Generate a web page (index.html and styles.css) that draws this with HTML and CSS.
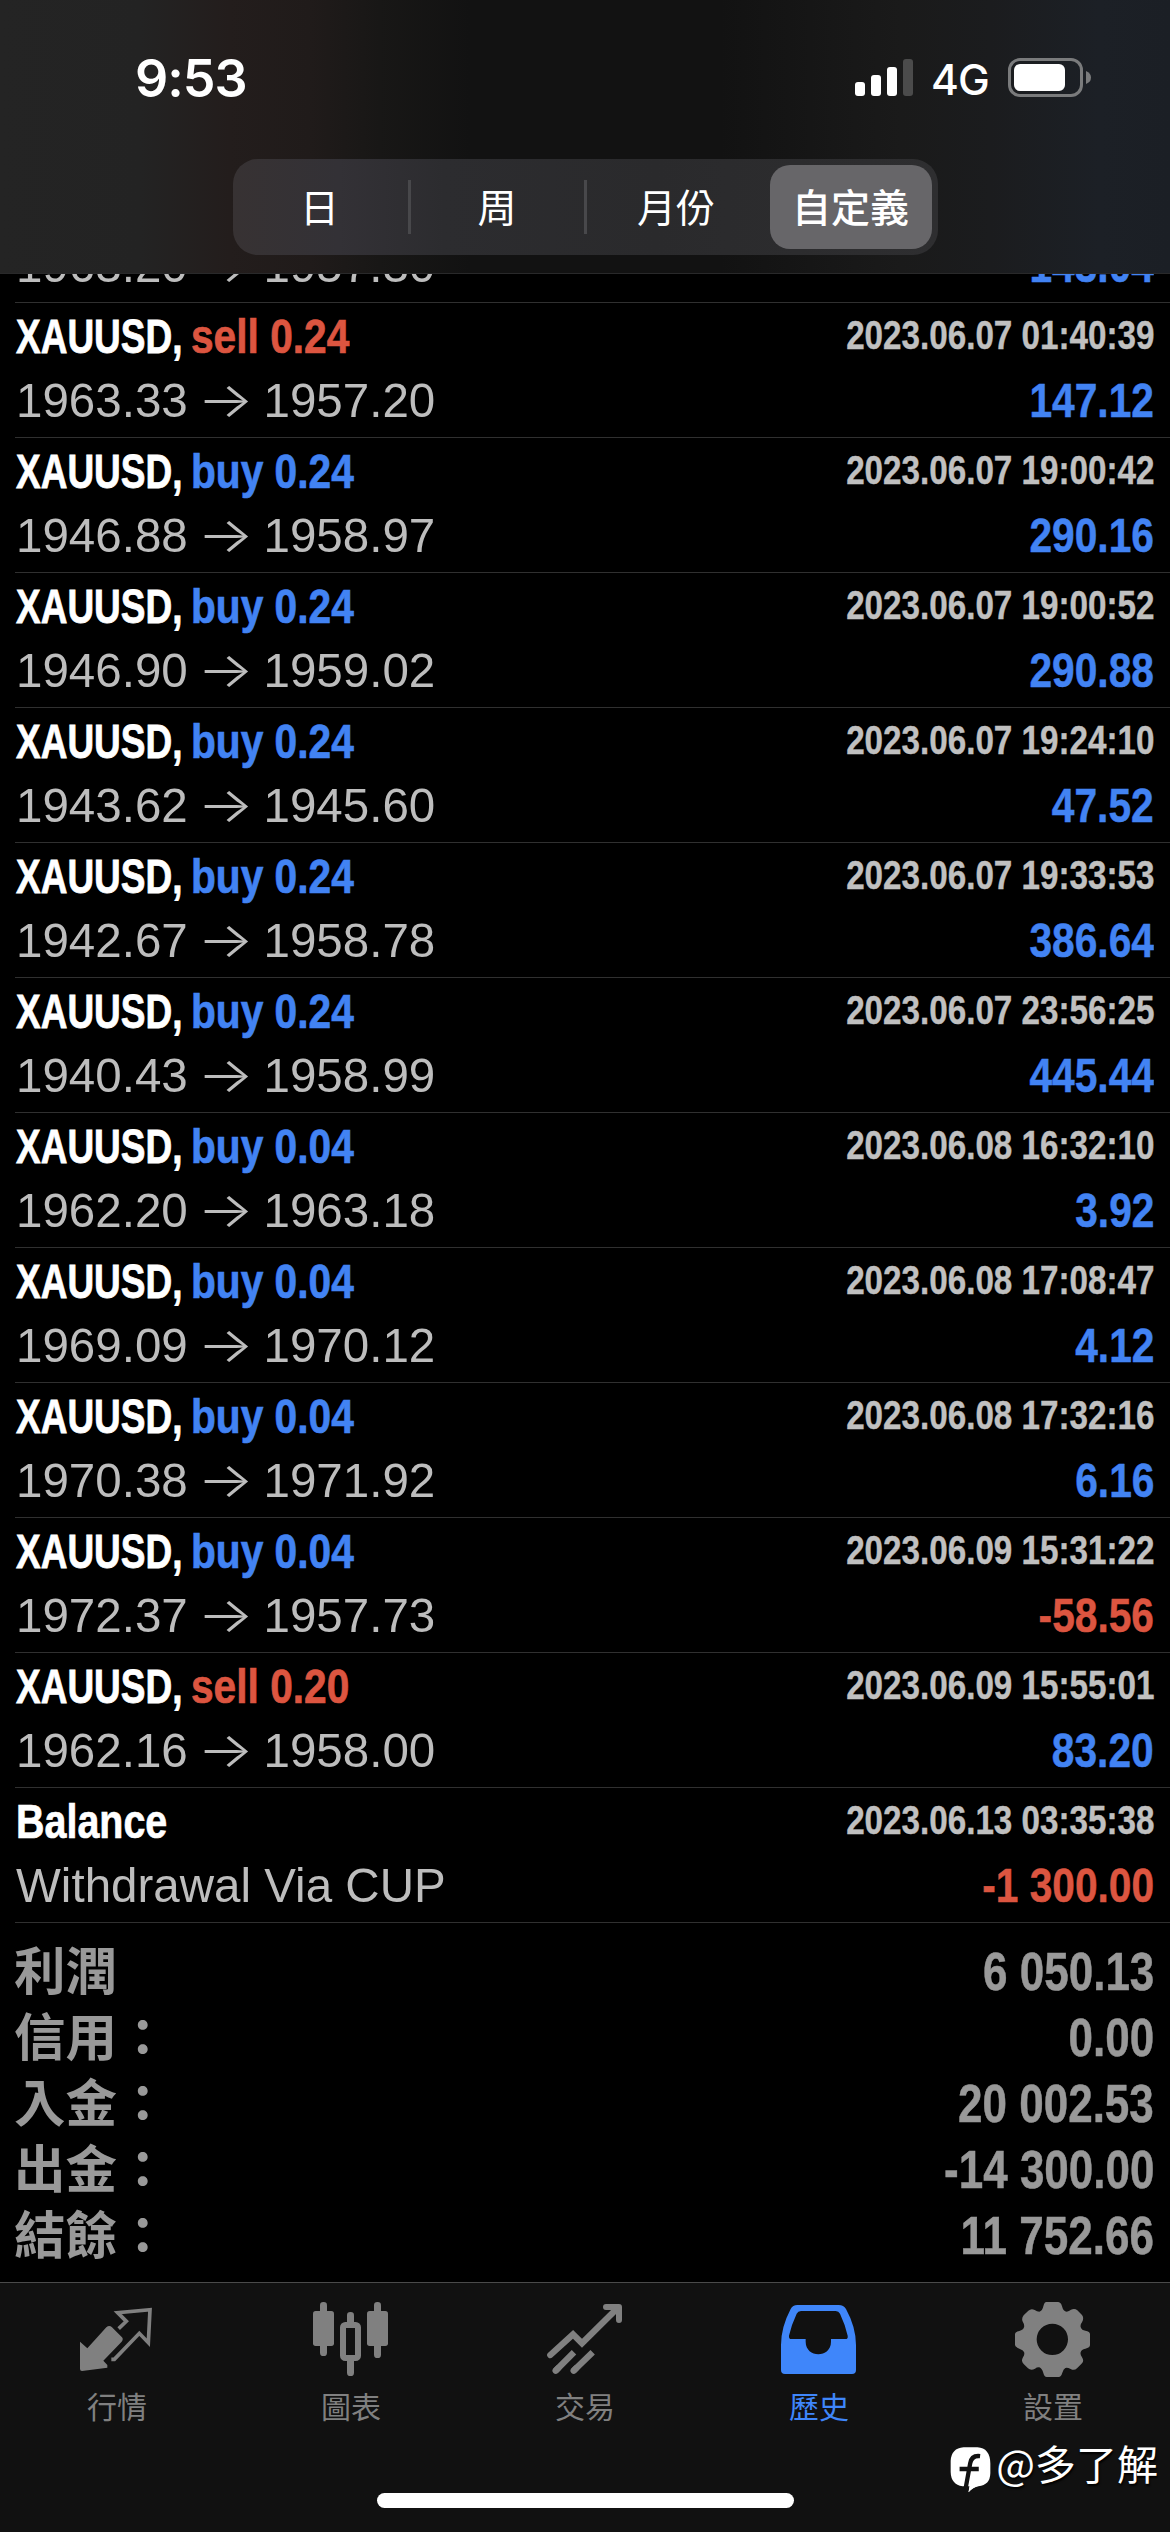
FILE: index.html
```html
<!DOCTYPE html>
<html lang="zh-Hant">
<head>
<meta charset="utf-8">
<title>歷史</title>
<link rel="stylesheet" href="styles.css">
</head>
<body>
<div class="screen">
  <header class="header">
    <div class="status">
      <span class="clock">9:53</span>
      <div class="status-right">
        <svg class="signal" viewBox="0 0 58 38"><g fill="#fff"><rect x="0" y="23" width="10" height="14" rx="3"/><rect x="16" y="16" width="10" height="21" rx="3"/><rect x="32" y="8" width="10" height="29" rx="3"/></g><rect x="48" y="0" width="10" height="37" rx="3" fill="#4b4b4b"/></svg>
        <span class="network">4G</span>
        <svg class="battery" viewBox="0 0 83 40"><rect x="1.5" y="1.5" width="72" height="36" rx="10.5" fill="none" stroke="#7a7b7c" stroke-width="3"/><rect x="6" y="6" width="51" height="27" rx="6" fill="#fff"/><path d="M78 13q5 2 5 6.500t-5 6.500z" fill="#7a7b7c"/></svg>
      </div>
    </div>
    <nav class="segments">
      <span class="segment day">日</span>
      <span class="segment week">周</span>
      <span class="segment month">月份</span>
      <span class="segment selected">自定義</span>
    </nav>
  </header>

  <main class="history">
    <section class="deals">
      <article class="deal clipped"><div class="line bottom"><span class="prices">1963.20<i>→</i>1957.30</span><span class="amount up">143.04</span></div></article>
      <article class="deal"><div class="line top"><span class="symbol">XAUUSD,</span><span class="side sell">sell 0.24</span><span class="time">2023.06.07 01:40:39</span></div><div class="line bottom"><span class="prices">1963.33<i>→</i>1957.20</span><span class="amount up">147.12</span></div></article>
      <article class="deal"><div class="line top"><span class="symbol">XAUUSD,</span><span class="side buy">buy 0.24</span><span class="time">2023.06.07 19:00:42</span></div><div class="line bottom"><span class="prices">1946.88<i>→</i>1958.97</span><span class="amount up">290.16</span></div></article>
      <article class="deal"><div class="line top"><span class="symbol">XAUUSD,</span><span class="side buy">buy 0.24</span><span class="time">2023.06.07 19:00:52</span></div><div class="line bottom"><span class="prices">1946.90<i>→</i>1959.02</span><span class="amount up">290.88</span></div></article>
      <article class="deal"><div class="line top"><span class="symbol">XAUUSD,</span><span class="side buy">buy 0.24</span><span class="time">2023.06.07 19:24:10</span></div><div class="line bottom"><span class="prices">1943.62<i>→</i>1945.60</span><span class="amount up">47.52</span></div></article>
      <article class="deal"><div class="line top"><span class="symbol">XAUUSD,</span><span class="side buy">buy 0.24</span><span class="time">2023.06.07 19:33:53</span></div><div class="line bottom"><span class="prices">1942.67<i>→</i>1958.78</span><span class="amount up">386.64</span></div></article>
      <article class="deal"><div class="line top"><span class="symbol">XAUUSD,</span><span class="side buy">buy 0.24</span><span class="time">2023.06.07 23:56:25</span></div><div class="line bottom"><span class="prices">1940.43<i>→</i>1958.99</span><span class="amount up">445.44</span></div></article>
      <article class="deal"><div class="line top"><span class="symbol">XAUUSD,</span><span class="side buy">buy 0.04</span><span class="time">2023.06.08 16:32:10</span></div><div class="line bottom"><span class="prices">1962.20<i>→</i>1963.18</span><span class="amount up">3.92</span></div></article>
      <article class="deal"><div class="line top"><span class="symbol">XAUUSD,</span><span class="side buy">buy 0.04</span><span class="time">2023.06.08 17:08:47</span></div><div class="line bottom"><span class="prices">1969.09<i>→</i>1970.12</span><span class="amount up">4.12</span></div></article>
      <article class="deal"><div class="line top"><span class="symbol">XAUUSD,</span><span class="side buy">buy 0.04</span><span class="time">2023.06.08 17:32:16</span></div><div class="line bottom"><span class="prices">1970.38<i>→</i>1971.92</span><span class="amount up">6.16</span></div></article>
      <article class="deal"><div class="line top"><span class="symbol">XAUUSD,</span><span class="side buy">buy 0.04</span><span class="time">2023.06.09 15:31:22</span></div><div class="line bottom"><span class="prices">1972.37<i>→</i>1957.73</span><span class="amount down">-58.56</span></div></article>
      <article class="deal"><div class="line top"><span class="symbol">XAUUSD,</span><span class="side sell">sell 0.20</span><span class="time">2023.06.09 15:55:01</span></div><div class="line bottom"><span class="prices">1962.16<i>→</i>1958.00</span><span class="amount up">83.20</span></div></article>
      <article class="deal"><div class="line top"><span class="balance">Balance</span><span class="time">2023.06.13 03:35:38</span></div><div class="line bottom"><span class="prices">Withdrawal Via CUP</span><span class="amount down">-1 300.00</span></div></article>
    </section>
    <section class="summary">
      <div class="total"><span>利潤</span><span class="sum">6 050.13</span></div>
      <div class="total"><span>信用：</span><span class="sum">0.00</span></div>
      <div class="total"><span>入金：</span><span class="sum">20 002.53</span></div>
      <div class="total"><span>出金：</span><span class="sum">-14 300.00</span></div>
      <div class="total"><span>結餘：</span><span class="sum">11 752.66</span></div>
    </section>
  </main>

  <footer class="tabbar">
    <div class="tabs">
      <div class="tab"><svg viewBox="51 24 240 240"><path fill="currentColor" d="M60 155L82 175 139 112Q148 104 156 112L186 142Q191 148 185 155L130 212 142 225V233L66 243Q60 243 60 237Z"/><path fill="none" stroke="currentColor" stroke-width="11" stroke-linejoin="miter" d="M176 116L199 94 173 68 270 59 265 158 238 130 163 208H154"/></svg><span>行情</span></div>
      <div class="tab"><svg viewBox="753 24 240 240"><g fill="currentColor"><rect x="780" y="36" width="21" height="162" rx="10"/><rect x="759" y="63" width="63" height="105" rx="8"/><rect x="942" y="36" width="21" height="168" rx="10"/><rect x="921" y="63" width="63" height="105" rx="8"/><rect x="861" y="66" width="21" height="45" rx="10"/><rect x="861" y="200" width="21" height="58" rx="10"/></g><rect x="849" y="105" width="45" height="99" rx="7" fill="none" stroke="currentColor" stroke-width="18"/></svg><span>圖表</span></div>
      <div class="tab"><svg viewBox="45 24 240 240"><g fill="none" stroke="currentColor" stroke-width="19" stroke-linecap="round"><path d="M61 195L129 133 156 160 262 55"/><path stroke-width="18" stroke-linejoin="round" d="M228 51H267V90"/><path stroke-linecap="butt" d="M76 243L132 187M130 243L188 187"/><path d="M77 242l8-8M131 242l8-8"/></g></svg><span>交易</span></div>
      <div class="tab active"><svg viewBox="747 24 240 240"><path fill="currentColor" fill-rule="evenodd" d="M802 45H926Q941 45 948 57Q978 112 978 165V240Q978 252 966 252H765Q753 252 753 240V165Q753 112 782 57Q788 45 802 45ZM813 63Q804 63 800 71Q784 105 777 137Q776 147 784 147H827V155C827 205 903 205 903 155V147H946Q955 147 953 137Q946 105 930 71Q926 63 917 63Z"/></svg><span>歷史</span></div>
      <div class="tab"><svg viewBox="249 24 240 240"><path fill="currentColor" fill-rule="evenodd" d="M349 36H385Q393 37 396 49Q400 65 410 65Q417 64 423 59Q434 54 442 61L456 75Q463 84 456 97Q449 106 453 113Q455 120 466 122Q480 125 480 132V165Q480 173 466 176Q454 178 452 187Q450 194 456 202Q463 212 456 220L441 235Q433 243 422 237Q411 231 406 234Q400 237 397 248Q393 261 386 261H350Q343 261 340 249Q336 235 328 232Q321 231 315 236Q303 243 294 235L281 222Q272 214 279 202Q285 193 282 186Q280 180 268 176Q255 171 255 165V132Q255 126 268 123Q280 120 282 112Q284 105 279 97Q273 86 281 76L295 62Q304 54 314 60Q321 65 328 65Q337 64 340 49Q343 36 349 36ZM367 101A47 47 0 1 0 367 195A47 47 0 1 0 367 101Z"/></svg><span>設置</span></div>
    </div>
    <div class="home"></div>
  </footer>

  <div class="watermark">
    <svg viewBox="54 468 124 144"><path fill="#fff" d="M95 471H137Q175 473 176 520V550Q175 586 140 589Q124 592 110 607L114 589H92Q57 584 56 546V512Q58 474 95 471Z"/><path fill="none" stroke="#111" stroke-width="13" d="M145 498Q119 495 115 520L101 597M83 537H141"/><path fill="#fff" d="M113 588H140Q124 592 110 607Z"/></svg>
    <span>@多了解</span>
  </div>
</div>
</body>
</html>
```
FILE: styles.css
```css
* { box-sizing: border-box; }
body { margin: 0; background: #000; }

.screen {
  position: relative;
  display: flex;
  flex-direction: column;
  width: 1170px;
  height: 2532px;
  overflow: hidden;
  background: #000;
  color: #fff;
  font-family: "Liberation Sans", "Noto Sans CJK TC", sans-serif;
}

/* header */
.header {
  display: flex;
  flex-direction: column;
  flex: none;
  height: 274px;
  align-items: center;
  border-bottom: 1px solid #29292a;
  background: linear-gradient(90deg, #242424 0, #232323 140px, #231d1c 230px, #201b1a 310px, #181716 380px, #121212 470px, #121212 720px, #1a1a1a 900px, #1b1c1e 990px, #1c2026 1100px, #1b1f25 1170px);
}
.status {
  display: flex;
  justify-content: space-between;
  width: 100%;
  height: 159px;
  padding: 0 79px 0 135px;
}
.clock {
  padding-top: 49px;
  font: 600 52px/60px Inter, sans-serif;
  letter-spacing: -1px;
}
.status-right { display: flex; align-items: flex-start; }
.signal { width: 58px; height: 38px; margin: 59px 18px 0 0; }
.network {
  width: 77px;
  padding-top: 55px;
  font: 500 42.500px/50px Inter, sans-serif;
  letter-spacing: -1px;
}
.battery { width: 83px; height: 40px; margin-top: 58px; }

.segments {
  display: grid;
  grid-template-columns: 172px 176px 183px 162px;
  width: 705px;
  height: 96px;
  padding: 6px;
  border-radius: 25px;
  background: linear-gradient(90deg, #373233, #333136 15%, #2c2c2f 30%, #2a2a2c 60%, #2e2e30);
}
.segment {
  display: flex;
  align-items: center;
  justify-content: center;
  padding-bottom: 4px;
  font: 400 39px/50px "Noto Sans CJK TC", sans-serif;
}
.day, .week { background: linear-gradient(#48484b, #48484b) 100% 50% / 3px 54px no-repeat; }
.day { padding-right: 10px; }
.week { padding-right: 3px; }
.month { padding-right: 4px; }
.selected { border-radius: 20px; background: #676669; font-weight: 500; }

/* deals */
.history { flex: none; height: 2008px; overflow: hidden; }
.deal {
  display: flow-root;
  height: 135px;
  margin-left: 15px;
  padding: 3px 16px 0 1px;
  border-bottom: 1px solid #303030;
}
.line { display: flex; align-items: baseline; white-space: nowrap; }
.top { height: 63.500px; font-weight: 700; font-size: 49px; line-height: 60px; }
.bottom { height: 60px; font-size: 49px; line-height: 60px; justify-content: space-between; }
.clipped { height: 29px; padding-top: 0; }
.clipped .bottom { margin-top: -39.500px; }
.symbol { width: 175px; transform: scaleX(.755); transform-origin: 0 50%; -webkit-text-stroke: .8px; }
.side { transform: scaleX(.83); transform-origin: 0 50%; -webkit-text-stroke: .7px; }
.balance { transform: scaleX(.805); transform-origin: 0 50%; -webkit-text-stroke: .7px; }
.time {
  margin-left: auto;
  color: #c0c0c0;
  font-size: 40px;
  transform: translateY(-4px) scaleX(.83);
  transform-origin: 100% 50%;
  -webkit-text-stroke: .4px;
}
.prices { display: flex; color: #bdbdbd; transform: scaleX(.97); transform-origin: 0 50%; }
.prices i {
  width: 78px;
  font-family: Inter, sans-serif;
  font-style: normal;
  font-weight: 300;
  text-align: center;
  transform: scaleX(1.25);
}
.amount { font-weight: 700; transform: scaleX(.83); transform-origin: 100% 50%; -webkit-text-stroke: .5px; }
.up, .buy { color: #4283f3; }
.sell, .down { color: #dc5540; }

/* totals */
.summary { padding: 12px 16px 0 14px; color: #999; }
.total {
  display: flex;
  align-items: baseline;
  justify-content: space-between;
  height: 66px;
  font: 700 51.500px/66px "Noto Sans CJK TC", sans-serif;
}
.sum {
  font: 700 53px/66px "Liberation Sans", sans-serif;
  transform: scaleX(.83);
  transform-origin: 100% 50%;
  -webkit-text-stroke: .5px;
}

/* tab bar */
.tabbar {
  display: flex;
  flex-direction: column;
  flex: none;
  align-items: center;
  height: 250px;
  border-top: 1px solid #4a4a4a;
  background: #111;
}
.tabs { display: grid; grid-template-columns: repeat(5, 234px); height: 210px; }
.tab {
  display: flex;
  flex-direction: column;
  align-items: center;
  padding-top: 15px;
  color: #808080;
  font: 400 30px/40px "Noto Sans CJK TC", sans-serif;
}
.tab svg { width: 80px; height: 80px; margin-bottom: 7px; }
.active { color: #3f86fa; }
.home { width: 417px; height: 15px; border-radius: 8px; background: #fff; }

.watermark {
  position: absolute;
  right: 12px;
  top: 2432px;
  display: flex;
  align-items: flex-start;
  font: 400 41px/60px "Noto Sans CJK TC", sans-serif;
  text-shadow: 1px 2px 2px #000;
}
.watermark svg { width: 41px; height: 48px; margin: 14px 5px 0 0; }
```
